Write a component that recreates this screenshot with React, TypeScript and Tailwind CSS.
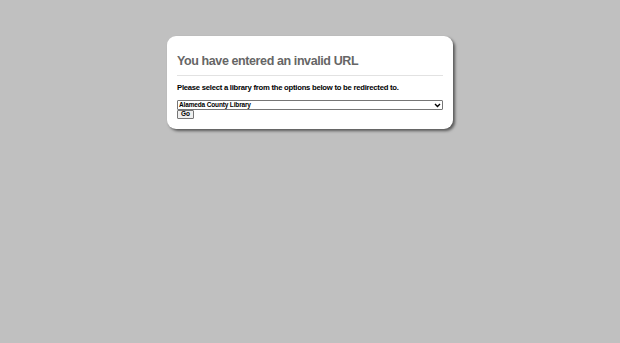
const App = () => {
  return (
    <div className="min-h-[343px] w-full bg-[#c0c0c0] font-['Liberation_Sans',Arial,sans-serif] pt-[36px]">
      <div className="mx-auto w-[286px] rounded-[9px] bg-white px-[10px] pt-[16px] pb-[10px] shadow-[2px_2px_3px_rgba(0,0,0,0.55)]">
        <h1 className="text-[12.5px] font-bold leading-[18px] tracking-[-0.4px] text-[#666666]">
          You have entered an invalid URL
        </h1>
        <hr className="mt-[5px] border-t border-[#e2e2e2]" />
        <p className="mt-[7px] text-[7.7px] font-bold leading-[10px] tracking-[-0.25px] text-black">
          Please select a library from the options below to be redirected to.
        </p>
        <div className="mt-[7px] flex flex-col items-start">
          <div className="flex h-[10px] w-full items-center justify-between rounded-[1px] border border-[#767676] bg-white px-[1px]">
            <span className="text-[6.5px] font-bold leading-none tracking-[-0.15px] text-black">Alameda County Library</span>
            <svg width="7" height="5" viewBox="0 0 7 5">
              <path d="M1 1 L3.5 3.5 L6 1" stroke="#000" strokeWidth="1.4" fill="none" />
            </svg>
          </div>
          <button className="flex h-[9px] w-[17px] items-center justify-center rounded-[1px] border border-[#767676] bg-[#efefef] text-[6.5px] font-bold leading-none text-black">
            Go
          </button>
        </div>
      </div>
    </div>
  );
};

export default App;
